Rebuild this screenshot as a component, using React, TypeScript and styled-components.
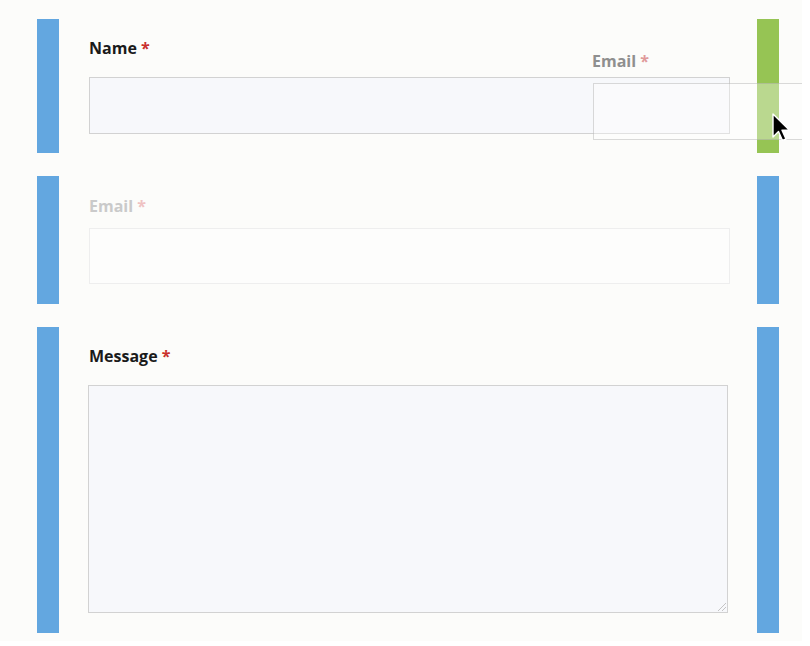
import React from "react";
import styled, { createGlobalStyle } from "styled-components";

const GlobalStyle = createGlobalStyle`
  html, body {
    margin: 0;
    padding: 0;
    background: #ffffff;
    overflow: hidden;
  }
  * {
    box-sizing: border-box;
  }
`;

interface Field {
  label: string;
  kind: "input" | "textarea";
  faded?: boolean;
  height: number;
}

const fields: Field[] = [
  { label: "Name", kind: "input", height: 134 },
  { label: "Email", kind: "input", faded: true, height: 128 },
  { label: "Message", kind: "textarea", height: 306 },
];

function App() {
  return (
    <>
      <GlobalStyle />
      <StCanvas>
        <StForm>
          {fields.map((field, i) => (
            <StRow key={field.label} $height={field.height}>
              <StBar />
              <StBody $faded={field.faded}>
                <StLabel $faded={field.faded}>
                  {field.label} <StRequired $faded={field.faded}>*</StRequired>
                </StLabel>
                {field.kind === "input" ? (
                  <StInput $faded={field.faded} />
                ) : (
                  <StTextarea />
                )}
              </StBody>
              <StBar $active={i === 0} />
            </StRow>
          ))}
        </StForm>

        <StGhost>
          <StGhostLabel>
            Email <StGhostStar>*</StGhostStar>
          </StGhostLabel>
          <StGhostBox />
        </StGhost>

        <StCursor width="22" height="30" viewBox="0 0 22 30">
          <path
            d="M2 2 L2 25 L7.5 19.5 L11.5 28.5 L15 27 L11 18.2 L18.5 18.2 Z"
            fill="#000"
            stroke="#fff"
            strokeWidth="1.4"
            strokeLinejoin="round"
          />
        </StCursor>
      </StCanvas>
    </>
  );
}

export default App;

const StCanvas = styled.div`
  position: relative;
  width: 802px;
  height: 641px;
  overflow: hidden;
  background: #fcfcfa;
  font-family: "Open Sans", "Liberation Sans", sans-serif;
`;

const StForm = styled.div`
  display: flex;
  flex-direction: column;
  gap: 23px;
  padding: 19px 0 0 37px;
  width: 779px;
`;

const StRow = styled.div<{ $height: number }>`
  display: flex;
  height: ${(p) => p.$height}px;
`;

const StBar = styled.div<{ $active?: boolean }>`
  flex: 0 0 22px;
  background: ${(p) => (p.$active ? "#96c454" : "#63a7e0")};
`;

const StBody = styled.div<{ $faded?: boolean }>`
  flex: 1;
  display: flex;
  flex-direction: column;
  padding: ${(p) => (p.$faded ? "19px 27px 0 30px" : "18px 27px 0 30px")};
`;

const StLabel = styled.div<{ $faded?: boolean }>`
  font-size: 16px;
  font-weight: 700;
  line-height: 22px;
  color: ${(p) => (p.$faded ? "#cacaca" : "#1a1a1a")};
  margin-bottom: ${(p) => (p.$faded ? "11px" : "18px")};
`;

const StRequired = styled.span<{ $faded?: boolean }>`
  color: ${(p) => (p.$faded ? "#efc2c2" : "#c9302c")};
`;

const StInput = styled.div<{ $faded?: boolean }>`
  height: ${(p) => (p.$faded ? "56px" : "57px")};
  background: ${(p) => (p.$faded ? "#fdfdfc" : "#f7f8fb")};
  border: 1px solid ${(p) => (p.$faded ? "#eeeeee" : "#d2d2d2")};
`;

const StTextarea = styled.div`
  position: relative;
  width: 640px;
  height: 228px;
  margin-left: -1px;
  background: #f7f8fb;
  border: 1px solid #d2d2d2;

  &::after {
    content: "";
    position: absolute;
    right: 1px;
    bottom: 1px;
    width: 8px;
    height: 8px;
    background: linear-gradient(
      135deg,
      transparent 45%,
      #c4c4c4 45%,
      #c4c4c4 55%,
      transparent 55%,
      transparent 70%,
      #c4c4c4 70%,
      #c4c4c4 80%,
      transparent 80%
    );
  }
`;

const StGhost = styled.div`
  position: absolute;
  left: 592px;
  top: 50px;
  width: 220px;
  display: flex;
  flex-direction: column;
  gap: 11px;
`;

const StGhostLabel = styled.div`
  font-size: 16px;
  font-weight: 700;
  line-height: 22px;
  color: #8f8f8f;
`;

const StGhostStar = styled.span`
  color: #e09a9a;
`;

const StGhostBox = styled.div`
  height: 57px;
  margin-left: 1px;
  background: rgba(255, 255, 255, 0.35);
  border: 1px solid rgba(150, 150, 150, 0.35);
`;

const StCursor = styled.svg`
  position: absolute;
  left: 771px;
  top: 112px;
`;
